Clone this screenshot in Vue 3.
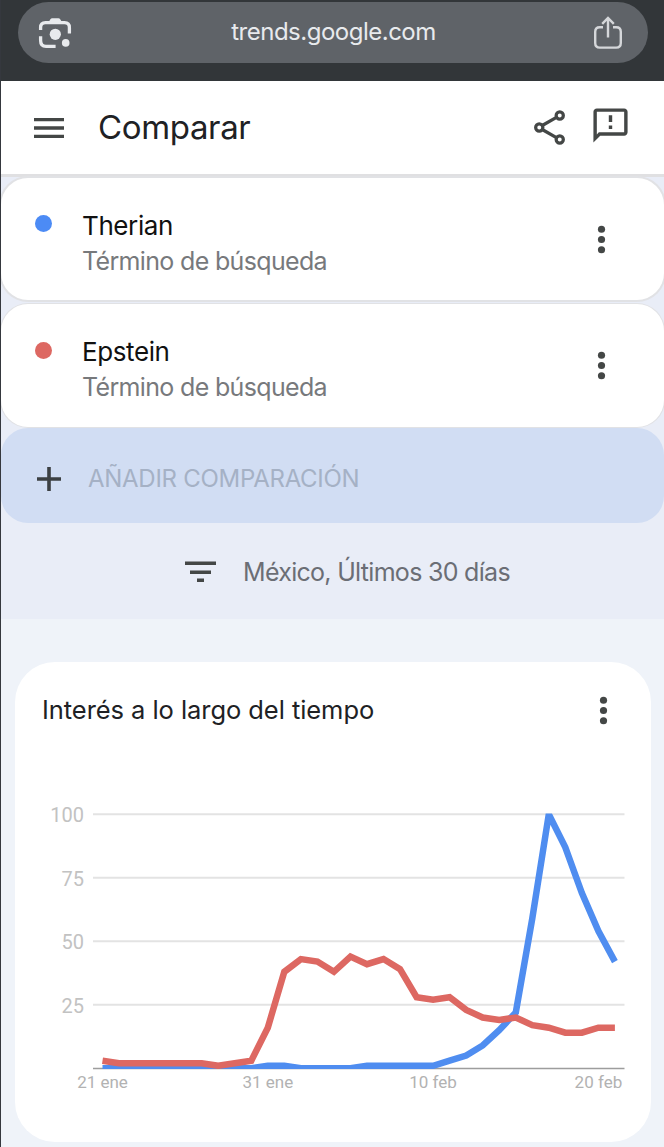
<script setup>
const terms = [
  { name: 'Therian', tone: 'blue' },
  { name: 'Epstein', tone: 'red' },
]

const therian = [0, 0, 0, 0, 0, 0, 0, 0, 0, 0, 1, 1, 0, 0, 0, 0, 1, 1, 1, 1, 1, 3, 5, 9, 15, 22, 59, 100, 87, 69, 54, 42]
const epstein = [3, 2, 2, 2, 2, 2, 2, 1, 2, 3, 16, 38, 43, 42, 38, 44, 41, 43, 39, 28, 27, 28, 23, 20, 19, 20, 17, 16, 14, 14, 16, 16]

const x = (i) => 87.5 + i * 16.53
const y = (v) => 288.3 - v * 2.54
const points = (values) => values.map((v, i) => `${x(i).toFixed(1)},${y(v).toFixed(1)}`).join(' ')

const grid = [100, 75, 50, 25]
const dates = [
  { i: 0, label: '21 ene' },
  { i: 10, label: '31 ene' },
  { i: 20, label: '10 feb' },
  { i: 30, label: '20 feb' },
]
</script>

<template>
  <div class="screen">
    <div class="browser">
      <div class="address">
        <svg class="lens" viewBox="0 0 34 34" fill="none">
          <path d="M2.6 14V11.5Q2.6 6.6 7.5 6.6H26.5Q31.4 6.6 31.4 11.5V17.6M2.6 20.3V24.5Q2.6 30.4 8 30.4H17.6" stroke="#e8eaed" stroke-width="3.3" stroke-linejoin="round" />
          <path d="M10.4 6.5L12.4 3.300Q13 2.200 14.200 2.200H20.400Q21.600 2.200 22.200 3.300L24.2 6.5Z" fill="#e8eaed" />
          <circle cx="17.3" cy="18.3" r="5.6" fill="#e8eaed" />
          <circle cx="27.7" cy="26.9" r="3.8" fill="#e8eaed" />
        </svg>
        <span class="host">trends.google.com</span>
        <svg class="export" viewBox="0 0 30 34" fill="none" stroke="#d5d7da" stroke-width="2.4">
          <path d="M10 11.2H6.8Q2.2 11.2 2.2 15.8V27Q2.2 31.6 6.8 31.6H23.2Q27.8 31.6 27.8 27V15.8Q27.8 11.2 23.2 11.2H20" />
          <path d="M15 21.5V2.4M9.2 7.8L15 2L20.8 7.8" />
        </svg>
      </div>
    </div>

    <header class="appbar">
      <svg class="menu" viewBox="0 0 24 24" fill="#444746"><path d="M3 6h18v2H3zM3 11h18v2H3zM3 16h18v2H3z" /></svg>
      <h1>Comparar</h1>
      <svg class="share" viewBox="0 0 24 24" fill="none" stroke="#444746" stroke-width="1.9">
        <path d="M8 10.700L15.8 6.2M8 13.300L15.8 17.8" />
        <circle cx="6" cy="12" r="2.1" /><circle cx="18" cy="5" r="2.1" /><circle cx="18" cy="19" r="2.1" />
      </svg>
      <svg class="feedback" viewBox="0 0 24 24" fill="#444746">
        <path fill-rule="evenodd" d="M20 2H4c-1.1 0-1.99.9-1.99 2L2 22l4-4h14c1.1 0 2-.9 2-2V4c0-1.100-.9-2-2-2zM20 16H5.170L4 17.200V4h16z" />
        <path d="M11 6h2v4h-2zM11 12h2v2h-2z" />
      </svg>
    </header>

    <section class="compare">
      <article v-for="t in terms" :key="t.name" class="term">
        <i class="dot" :class="t.tone"></i>
        <div class="label">
          <h2 :class="t.tone">{{ t.name }}</h2>
          <p>Término de búsqueda</p>
        </div>
        <svg class="more" viewBox="0 0 24 24" fill="#444746"><circle cx="12" cy="6" r="2.1" /><circle cx="12" cy="12" r="2.1" /><circle cx="12" cy="18" r="2.1" /></svg>
      </article>
      <div class="add">
        <svg viewBox="0 0 24 24" fill="none" stroke="#3c4043" stroke-width="3.600"><path d="M0 12H24M12 0V24" /></svg>
        <span>AÑADIR COMPARACIÓN</span>
      </div>
      <div class="filter">
        <svg viewBox="0 0 31 22" fill="#444746"><path d="M0 0.500h31v3.500H0zM5 9.500h21v3.500H5zM12 17.500h7v3.500h-7z" /></svg>
        <span>México, Últimos 30 días</span>
      </div>
    </section>

    <section class="panel">
      <div class="panel-head">
        <h3>Interés a lo largo del tiempo</h3>
        <svg class="more" viewBox="0 0 24 24" fill="#444746"><circle cx="12" cy="6" r="2.1" /><circle cx="12" cy="12" r="2.1" /><circle cx="12" cy="18" r="2.1" /></svg>
      </div>
      <svg class="chart" width="636" height="360" viewBox="0 0 636 360">
        <defs><clipPath id="plot"><rect x="78" y="33.500" width="532" height="255.500" /></clipPath></defs>
        <g v-for="g in grid" :key="g">
          <line x1="78" x2="609.500" :y1="y(g)" :y2="y(g)" stroke="#e3e3e3" stroke-width="2" />
          <text class="value" x="69" :y="y(g) + 8" text-anchor="end">{{ g }}</text>
        </g>
        <line x1="78" x2="609.500" y1="288.500" y2="288.500" stroke="#9d9d9d" stroke-width="1.700" />
        <g clip-path="url(#plot)" fill="none" stroke-width="6.500">
          <polyline :points="points(therian)" stroke="#4f8df0" />
          <polyline :points="points(epstein)" stroke="#dd6862" />
        </g>
        <text v-for="d in dates" :key="d.i" class="date" :x="x(d.i)" y="308" text-anchor="middle">{{ d.label }}</text>
      </svg>
    </section>
  </div>
</template>

<style>
body { margin: 0; background: #eff3f9; }
</style>

<style scoped>
.screen {
  box-sizing: border-box;
  width: 664px;
  height: 1147px;
  overflow: hidden;
  border-left: 1px solid #35383e;
  background: #eff3f9;
  font-family: Inter, "Open Sans", sans-serif;
}
h1, h2, h3, p { margin: 0; font-weight: 400; white-space: nowrap; }
svg { display: block; flex: none; }

.browser {
  box-sizing: border-box;
  height: 81px;
  padding: 2px 16px 0 17px;
  background: #323639;
}
.address {
  box-sizing: border-box;
  display: flex;
  align-items: center;
  justify-content: space-between;
  height: 61px;
  padding: 0 25px 0 20px;
  border-radius: 31px;
  background: #5f6368;
}
.lens { width: 34px; height: 34px; }
.export { width: 30px; height: 34px; }
.host {
  margin: -2px 0 0 2px;
  color: #e8eaed;
  font-size: 24px;
  line-height: 30px;
  letter-spacing: -0.5px;
}

.appbar {
  box-sizing: border-box;
  display: flex;
  align-items: center;
  height: 93px;
  padding: 0 33px 0 28px;
  background: #fff;
}
.menu { width: 40px; height: 40px; }
.appbar h1 {
  flex: 1;
  margin: -2px 0 0 29px;
  color: #202124;
  font-size: 33px;
  line-height: 44px;
  letter-spacing: -0.35px;
}
.share { width: 41px; height: 41px; margin-right: 20px; }
.feedback { width: 41px; height: 41px; margin-top: -4px; }

.compare {
  box-sizing: border-box;
  display: flex;
  flex-direction: column;
  height: 445px;
  padding-top: 4px;
  background: linear-gradient(#e0e0e2 0 3px, #e9edf7 3px);
}
.term {
  box-sizing: border-box;
  display: flex;
  align-items: center;
  height: 122px;
  margin-bottom: 4px;
  padding: 0 42px 0 34px;
  border-radius: 27px;
  background: #fff;
  box-shadow: 0 0 0 2px #e1e2e5;
}
.term + .term { height: 123px; margin-bottom: 1px; box-shadow: 0 0 0 1px #e1e2e5; }
.dot { width: 17px; height: 17px; margin: -31px 30px 0 0; border-radius: 50%; }
.dot.blue { background: #4c8bf5; }
.dot.red { background: #dd6862; }
.label { flex: 1; padding-top: 8px; }
.term h2 { color: #111; font-size: 26px; line-height: 35px; letter-spacing: -0.4px; }
.term p { color: #77797c; font-size: 25px; line-height: 36px; letter-spacing: -0.66px; }
.more { width: 41px; height: 41px; }

.add {
  display: flex;
  align-items: center;
  height: 95px;
  padding: 7px 0 0 36px;
  box-sizing: border-box;
  border-radius: 27px;
  background: #d1ddf3;
}
.add svg { width: 24px; height: 24px; }
.add span {
  margin: -1px 0 0 27px;
  color: #a5b1c5;
  font-size: 24px;
  line-height: 32px;
  letter-spacing: -0.28px;
}
.filter {
  display: flex;
  flex: 1;
  align-items: center;
  justify-content: flex-start;
  padding: 2px 0 0 184px;
}
.filter svg { width: 31px; height: 22px; }
.filter span {
  margin-left: 27px;
  color: #6b6e75;
  font-size: 25px;
  line-height: 34px;
  letter-spacing: -0.7px;
}

.panel {
  width: 636px;
  height: 480px;
  margin: 43px 0 0 14px;
  border-radius: 40px;
  background: #fff;
}
.panel-head {
  display: flex;
  align-items: center;
  justify-content: space-between;
  height: 96px;
  padding: 0 27px;
}
.panel h3 { color: #202124; font-size: 25.5px; line-height: 36px; letter-spacing: -0.06px; }
.chart { margin-top: 22px; }
.value { fill: #c2c2c2; font: 20px Roboto, sans-serif; }
.date { fill: #b2b2b2; font: 17px Roboto, sans-serif; }
</style>
